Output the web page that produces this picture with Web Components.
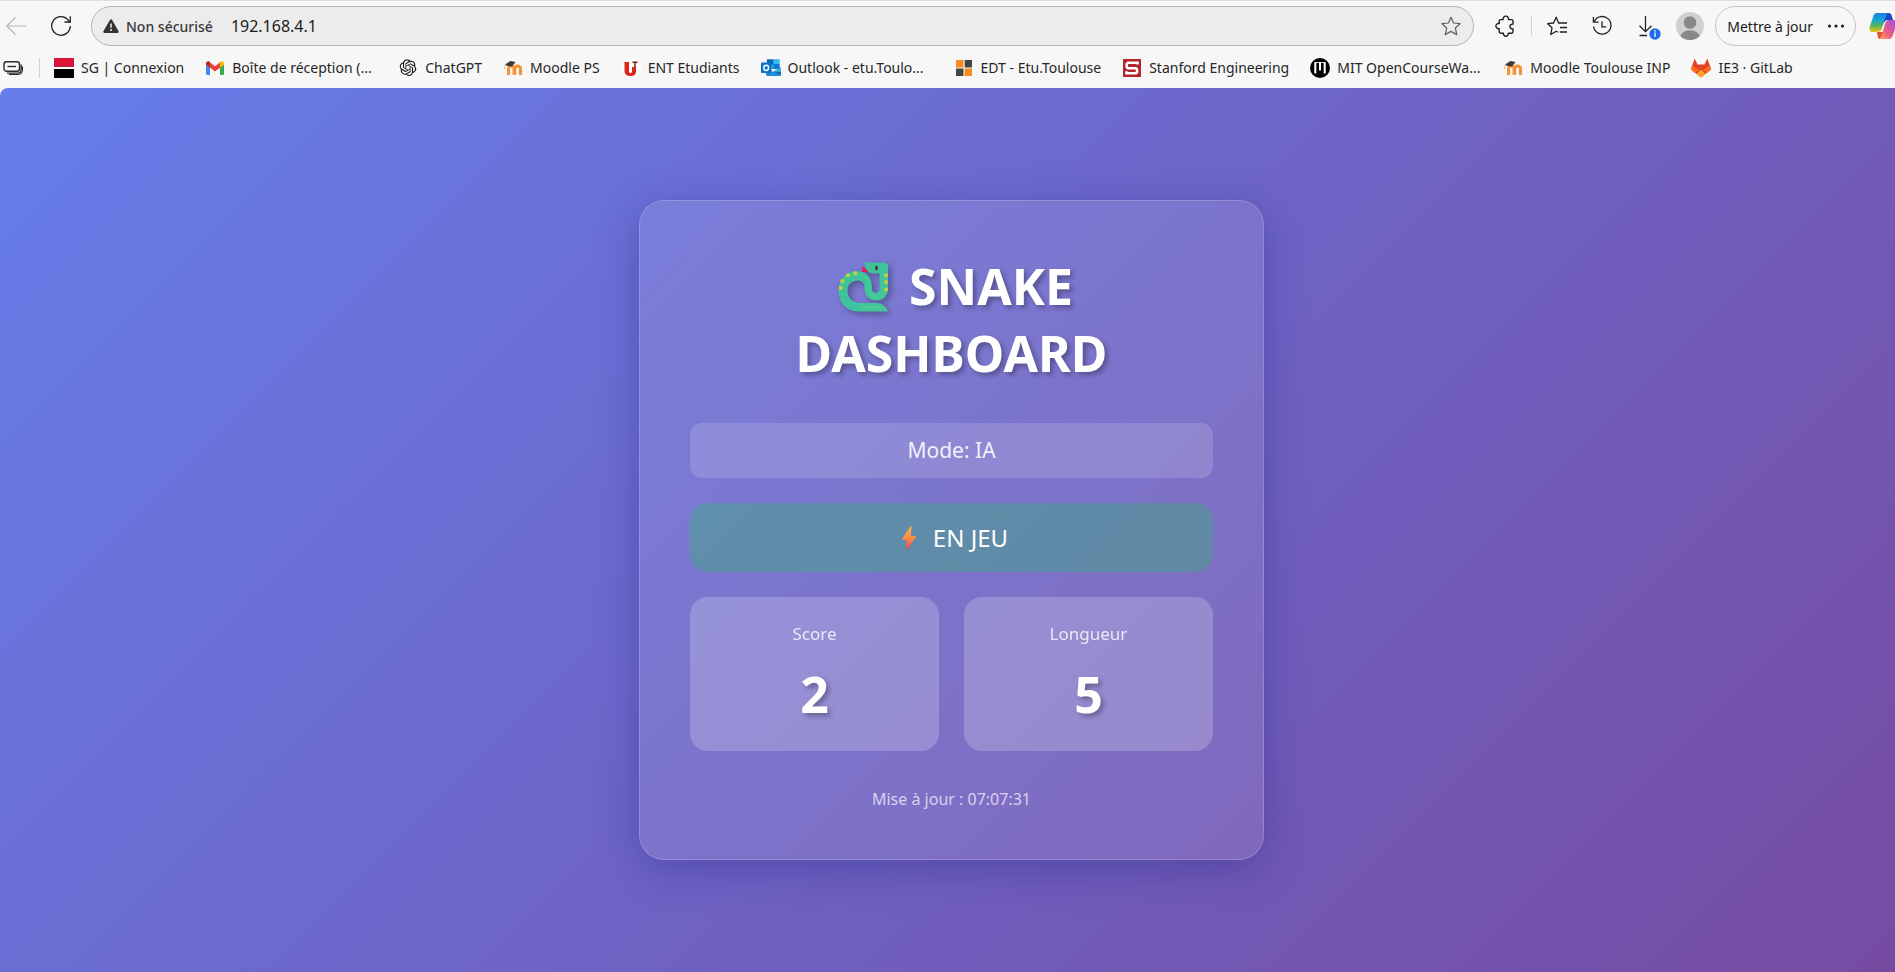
<!DOCTYPE html>
<html lang="fr">
<head>
<meta charset="utf-8">
<title>Snake Dashboard</title>
<style>
html,body{margin:0;height:100%}
body{overflow:hidden;background:#f7f7f7;font-family:"Noto Sans",sans-serif;color:#1b1b1b}
</style>
</head>
<body>
<browser-window>
  <browser-toolbar slot="chrome"></browser-toolbar>
  <bookmark-bar slot="chrome">
    <bookmark-link icon="sg">SG | Connexion</bookmark-link>
    <bookmark-link icon="gmail" cut>Boîte de réception (...</bookmark-link>
    <bookmark-link icon="chatgpt">ChatGPT</bookmark-link>
    <bookmark-link icon="moodle">Moodle PS</bookmark-link>
    <bookmark-link icon="ent">ENT Etudiants</bookmark-link>
    <bookmark-link icon="outlook" cut>Outlook - etu.Toulo...</bookmark-link>
    <bookmark-link icon="edt">EDT - Etu.Toulouse</bookmark-link>
    <bookmark-link icon="stanford">Stanford Engineering</bookmark-link>
    <bookmark-link icon="mit" cut>MIT OpenCourseWa...</bookmark-link>
    <bookmark-link icon="moodle">Moodle Toulouse INP</bookmark-link>
    <bookmark-link icon="gitlab">IE3 · GitLab</bookmark-link>
  </bookmark-bar>
  <snake-dashboard>
    <span slot="mode">Mode: IA</span>
    <span slot="status">EN JEU</span>
    <stat-card slot="stats" label="Score">2</stat-card>
    <stat-card slot="stats" label="Longueur">5</stat-card>
    <span slot="updated">Mise à jour : 07:07:31</span>
  </snake-dashboard>
</browser-window>

<script>
const ICONS = {
back:['0 0 20 20','<g fill="none" stroke="#b4b4b4" stroke-width="1.2"><path d="M.5 10H20M9.500 1.500.8 10l8.700 8.500"/></g>'],
refresh:['0 0 20 20','<g fill="none" stroke="#1f1f1f" stroke-width="1.300"><path d="M19.300 10A9.300 9.300 0 1 1 16.800 3.600L18.800 5.700"/><path d="M19.300.3V6H13.500"/></g>'],
warn:['0 0 16 14','<path d="M8 .3c.5 0 .9.300 1.100.7l6.500 11.300c.5.8 0 1.600-.9 1.600H1.300c-.9 0-1.400-.8-.9-1.600L6.900 1C7.100.6 7.500.3 8 .3z" fill="#333"/><path d="M8 4.500v4.200" stroke="#f0f0f0" stroke-width="1.500"/><circle cx="8" cy="11.100" r="1" fill="#f0f0f0"/>'],
star:['0 0 20 20','<path d="M10 1.200 12.600 7l6.500.7-4.800 4.300 1.500 6.600L10 15.400l-5.800 3.200 1.500-6.600L.9 7.700 7.400 7z" fill="none" stroke="#616161" stroke-width="1.200" stroke-linejoin="round"/>'],
puzzle:['0 0 20 20','<path d="M4 3.600H7.200A2.700 2.700 0 1 1 12.400 3.600H15.600Q17 3.600 17 5V8.200A2.400 2.400 0 1 0 17 12.800V15.800Q17 17.200 15.600 17.200H12.300A2.500 2.500 0 1 1 7.400 17.200H4.600Q3.200 17.200 3.200 15.800V12.600A2.600 2.600 0 1 1 3.200 7.600V5Q3.200 3.600 4.600 3.600" fill="none" stroke="#222" stroke-width="1.400" stroke-linejoin="round"/>'],
favs:['0 0 20 20','<g fill="none" stroke="#222" stroke-width="1.300" stroke-linejoin="round"><path d="M12.500 7H11.600L9.200 1.200 6.600 7 .7 7.700 5 11.800 3.800 18.500 9.200 15.300 11 16.300M12 7H20M13 11.500H20M12.800 16H20"/></g>'],
history:['0 0 21 20','<g fill="none" stroke="#222" stroke-width="1.400"><path d="M2.300 5.500A9.200 9.200 0 1 1 1.600 10.500"/><path d="M1.500.5V6H7"/><path d="M10.500 5V11H15"/></g>'],
download:['0 0 24 24','<g fill="none" stroke="#222" stroke-width="1.300"><path d="M8.500 0V15.500M2.500 9.800 8.500 15.700 14.500 9.800M2.500 19.500H10"/></g><circle cx="18" cy="18" r="5.700" fill="#1f6cf0"/><path d="M18 16.600v4.400" stroke="#fff" stroke-width="1.300"/><circle cx="18" cy="14.900" r=".8" fill="#fff"/>'],
avatar:['0 0 28 28','<defs><clipPath id="a"><circle cx="14" cy="14" r="14"/></clipPath></defs><g clip-path="url(#a)"><rect width="28" height="28" fill="#d2d0ce"/><circle cx="14" cy="10.500" r="6.300" fill="#8a8886"/><ellipse cx="14" cy="26" rx="10" ry="7.800" fill="#8a8886"/></g>'],
dots:['0 0 18 4','<g fill="#1b1b1b"><circle cx="2.500" cy="2" r="1.600"/><circle cx="9" cy="2" r="1.600"/><circle cx="15.500" cy="2" r="1.600"/></g>'],
copilot:['0 0 28 28','<defs><linearGradient id="c1" x1="0" y1="0" x2="0" y2="1"><stop offset="0" stop-color="#1a7de0"/><stop offset=".35" stop-color="#14a5d8"/><stop offset=".65" stop-color="#52b45c"/><stop offset="1" stop-color="#f2c511"/></linearGradient><linearGradient id="c2" x1="0" y1="1" x2=".9" y2="0"><stop offset="0" stop-color="#ffb057"/><stop offset=".4" stop-color="#f2607d"/><stop offset="1" stop-color="#a44fe0"/></linearGradient></defs><path d="M15 1h4.500c2 0 3 1.500 3.500 3.500L24 8h-5c-3 0-4 2-5 5z" fill="#1c45c8"/><path d="M10 27c-1-1-1.500-4-2-7h8l4 7z" fill="#e2502c"/><path d="M8 1h12c-2 0-3 2-4 5l-3 10c-1 3-2.500 4-5 4H4c-3 0-4-2-3.200-5L4 5c.8-2.600 2-4 4-4z" fill="url(#c1)"/><path d="M20 8h4c3 0 4 2 3.200 5L24 23c-.8 2.600-2 4-4 4H9c2 0 3-2 4-5l3-10c1-3 2-4 4-4z" fill="url(#c2)"/>'],
collections:['0 0 20 20','<g fill="none" stroke="#2a2a2a" stroke-width="1.400"><rect x="1" y="3.800" width="15.500" height="9.500" rx="2.500"/><path d="M4.500 8.500H13"/><path d="M18.200 6.500v5.300q0 3.300-3.300 3.300H4" /><path d="M19.500 8.500v4q0 4-4 4H6" stroke-width="1"/></g>'],
sg:['0 0 20 20','<path d="M0 0h20v10H0z" fill="#dc143c"/><path d="M0 8.200h20V11H0z" fill="#fff"/><path d="M0 8h20v.9H0z" fill="#b5102f"/><path d="M0 11h20v9H0z"/>'],
gmail:['0 0 20 20','<path d="M1 6v9.500Q1 17 2.500 17H5V9z" fill="#4285f4"/><path d="M15 9v8h2.500Q19 17 19 15.500V6z" fill="#34a853"/><path d="M5 4.500v5.300L10 13.500l5-3.700V4.500L10 8.200z" fill="#ea4335"/><path d="M1 5.500C1 3.300 3.400 2.500 5 3.800V9.800L1 6.800z" fill="#c5221f"/><path d="M19 5.500c0-2.200-2.400-3-4-1.700V9.800l4-3z" fill="#fbbc04"/>'],
chatgpt:['-2.500 -2 29 29','<path fill="#111" d="M22.2819 9.8211a5.9847 5.9847 0 0 0-.5157-4.9108 6.0462 6.0462 0 0 0-6.5098-2.9A6.0651 6.0651 0 0 0 4.9807 4.1818a5.9847 5.9847 0 0 0-3.9977 2.9 6.0462 6.0462 0 0 0 .7427 7.0966 5.98 5.98 0 0 0 .511 4.9107 6.051 6.051 0 0 0 6.5146 2.9001A5.9847 5.9847 0 0 0 13.2599 24a6.0557 6.0557 0 0 0 5.7718-4.2058 5.9894 5.9894 0 0 0 3.9977-2.9001 6.0557 6.0557 0 0 0-.7475-7.0729zm-9.022 12.6081a4.4755 4.4755 0 0 1-2.8764-1.0408l.1419-.0804 4.7783-2.7582a.7948.7948 0 0 0 .3927-.6813v-6.7369l2.02 1.1686a.071.071 0 0 1 .038.052v5.5826a4.504 4.504 0 0 1-4.4945 4.4944zm-9.6607-4.1254a4.4708 4.4708 0 0 1-.5346-3.0137l.142.0852 4.783 2.7582a.7712.7712 0 0 0 .7806 0l5.8428-3.3685v2.3324a.0804.0804 0 0 1-.0332.0615L9.74 19.9502a4.4992 4.4992 0 0 1-6.1408-1.6464zM2.3408 7.8956a4.485 4.485 0 0 1 2.3655-1.9728V11.6a.7664.7664 0 0 0 .3879.6765l5.8144 3.3543-2.0201 1.1685a.0757.0757 0 0 1-.071 0l-4.8303-2.7865A4.504 4.504 0 0 1 2.3408 7.872zm16.5963 3.8558L13.1038 8.364 15.1192 7.2a.0757.0757 0 0 1 .071 0l4.8303 2.7913a4.4944 4.4944 0 0 1-.6765 8.1042v-5.6772a.79.79 0 0 0-.407-.667zm2.0107-3.0231l-.142-.0852-4.7735-2.7818a.7759.7759 0 0 0-.7854 0L9.409 9.2297V6.8974a.0662.0662 0 0 1 .0284-.0615l4.8303-2.7866a4.4992 4.4992 0 0 1 6.6802 4.66zM8.3065 12.863l-2.02-1.1638a.0804.0804 0 0 1-.038-.0567V6.0742a4.4992 4.4992 0 0 1 7.3757-3.4537l-.142.0805L8.704 5.459a.7948.7948 0 0 0-.3927.6813zm1.0976-2.3654l2.602-1.4998 2.6069 1.4998v2.9994l-2.5974 1.4997-2.6067-1.4997Z"/>'],
moodle:['0 0 20 20','<path d="M5.500 17V11q0-3 2.800-3t2.800 3v6M11.700 17V11q0-3 2.900-3t2.900 3v6" fill="none" stroke="#f98012" stroke-opacity=".85" stroke-width="3"/><path d="M2 6.500 7.500 3 12.500 4 9 8.500 4.500 8z" fill="#3b3736"/><path d="M2.300 6.500 1.300 11.500" stroke="#f3b98a" stroke-width="1"/>'],
ent:['0 0 20 20','<circle cx="10" cy="10" r="10" fill="#fff"/><path d="M3.500 4H8v9.500q0 1.800 1.500 1.800t1.500-1.800V9h4v4.500q0 4.500-5.500 4.500t-6-4.500z" fill="#e2231a"/><path d="M11.500 4.300h5M14 4v5" stroke="#7a1a1a" stroke-width="1.500"/>'],
outlook:['0 0 20 20','<path d="M6 1.500h12.500V11H6z" fill="#28a8ea"/><path d="M6 1.500h6.500v5H6z" fill="#0f64b4"/><path d="M12.500 6h6v5h-6z" fill="#0f78d4"/><path d="M12.500 1.500h6V6h-6z" fill="#32bdf0"/><path d="M5 10.500 12.500 14 20 9.500V16.500Q20 18 18.500 18H6.500Q5 18 5 16.500z" fill="#1f8fe0"/><path d="M12.500 13.500 20 17.500V9.500z" fill="#1668b8"/><path d="M12.500 13.800 20 9.500V14z" fill="#38c0f2" opacity=".8"/><rect y="4.500" width="10.500" height="10.500" rx="1" fill="#0a70ca"/><ellipse cx="5.200" cy="9.800" rx="2.400" ry="2.600" fill="none" stroke="#fff" stroke-width="1.500"/>'],
edt:['0 0 20 20','<path d="M2 2h7.500v7.500H2zM10.700 10.500H18V18h-7.300z" fill="#f68b1f"/><path d="M10.700 2H18v7.500h-7.300zM2 10.500h7.500V18H2z" fill="#444"/>'],
stanford:['0 0 20 20','<path d="M1 1h18v18H1z" fill="#b1252b"/><path d="M15.500 6.500V4.700H6L4.700 6v3.200L6 10.200h8l1 1v3l-1 1H4.500v-2" fill="none" stroke="#fff" stroke-width="2.600"/>'],
mit:['0 0 20 20','<circle cx="10" cy="10" r="10"/><path d="M5.300 4.500V15.500M10 4.500v8M14.700 4.500V15.500" stroke="#fff" stroke-width="2"/><path d="M4.500 4.500H15.500" stroke="#fff" stroke-width=".8"/>'],
gitlab:['0 0 20 20','<path d="M3.700.5 1 8 0 11.500 10 19.500 20 11.500 19 8 16.300.5 13.500 6.500h-7z" fill="#e24329"/><path d="M0 11.500 1 7.500 6 10.500 10 13.800 14 10.500 19 7.500 20 11.500 16 15 13 12.500H7L4 15z" fill="#fc6d26"/><path d="M10 11.800 14.500 15.700 10 19.700 5.500 15.700z" fill="#fca326"/>'],
snake:['0 0 66 52','<defs><linearGradient id="s" x1="0" y1="0" x2="1" y2="1"><stop offset="0" stop-color="#40bd93"/><stop offset=".5" stop-color="#3fc39c"/><stop offset="1" stop-color="#46c69c"/></linearGradient></defs><path d="M39 10.500 31.500 5l1.300 3.400-1.600 2.900 6-.3z" fill="#e8174b"/><path d="M35 1.500H53.500Q58 1.500 58 6V27.500C58 35 53 39.500 46.500 39.500S34.500 35 34.500 28V26.500C34.500 22 31.500 19.500 28 19.500c-6 0-10.500 3.500-10.500 10.500 0 7 5 12 13 12H45.500C52 42 56 45 58 50.500H29.500C17 50.500 8.500 42 8.500 30c0-12.500 8.500-20 18.500-20 9 0 15 6.500 15 15.500v3c0 2 1.500 3.200 3.500 3.200s4-1.200 4-3.700V12.500H43.500C38.500 12.500 35 9 35 1.500z" fill="url(#s)"/><path d="M12 27c0-8 7-13.500 15-13.500S39 20 39 27c0 5 3 9 8 9M31 46h19" fill="none" stroke="#4bd787" stroke-width="2.500" stroke-linecap="round" opacity=".45"/><ellipse cx="46.500" cy="7" rx="1.300" ry="2.200" fill="#402a32"/><g fill="#c3d044"><circle cx="10.700" cy="27" r="2"/><circle cx="12.300" cy="20" r="2"/><circle cx="17.700" cy="14.200" r="2"/><circle cx="25.300" cy="12.300" r="2"/><circle cx="56" cy="14.200" r="2"/><circle cx="56" cy="21" r="2"/><circle cx="56" cy="28.500" r="2"/></g>'],
bolt:['0 0 32 24','<defs><linearGradient id="b" x1="0" y1="0" x2="0" y2="1"><stop offset="0" stop-color="#fcb53b"/><stop offset=".5" stop-color="#ff8b45"/><stop offset="1" stop-color="#f8424d"/></linearGradient></defs><path d="M15.500.5c.7-.6 1.200-.3 1.100.5L15.800 10H20c.9 0 1.200.6.7 1.300L12.700 23c-.6.8-1.300.5-1.200-.4L12 14H8c-.8 0-1.200-.7-.7-1.400z" fill="url(#b)"/>']
};

const define = (name, html, setup) => customElements.define(name, class extends HTMLElement {
  constructor(){
    super();
    const t = document.createElement('template');
    t.innerHTML = html;
    this.attachShadow({mode:'open'}).append(t.content.cloneNode(true));
  }
  connectedCallback(){ if (setup) setup(this, this.shadowRoot); }
});

// Inline SVG icon; the host sets its size.
define('ui-icon', `<style>:host{display:inline-block;flex:none;width:20px;height:20px}svg{display:block;width:100%;height:100%;overflow:visible}</style><svg aria-hidden="true"></svg>`,
 (el, root) => {
  const [box, body] = ICONS[el.getAttribute('name')];
  const svg = root.querySelector('svg');
  svg.setAttribute('viewBox', box);
  svg.innerHTML = body;
});

// The window runs slightly past the right edge of the screen.
define('browser-window', `<style>
:host{display:flex;flex-direction:column;min-height:100vh;width:calc(100% + 8px);background:#f7f7f7}
main{flex:1;display:flex;flex-direction:column}
</style><slot name="chrome"></slot><main><slot></slot></main>`);

define('browser-toolbar', `<style>
:host{display:flex;align-items:center;box-sizing:border-box;border-top:1px solid #dedede;padding:5px 6px 0 6px}
button{font:inherit;color:inherit;background:none;border:0;padding:0;margin:0;display:flex;align-items:center;flex:none}
.nav{display:flex;gap:25px;margin-right:20px}
.address{flex:1;display:flex;align-items:center;box-sizing:border-box;height:40px;padding:0 12px 0 11px;border:1px solid #b5b5b5;border-radius:20px;background:#ececec}
.security{gap:7px;font-size:14px;font-weight:500;color:#3a3a3a}
.security ui-icon{width:16px;height:14px}
input{flex:1;min-width:0;border:0;outline:0;background:none;padding:0;margin:0 18px;font:16px "Noto Sans",sans-serif;color:#1b1b1b}
.tools{display:flex;align-items:center;gap:25px;margin-left:22px}
.sep{width:1px;height:20px;background:#cfcfcf;margin:0 -10px}
.download ui-icon{width:24px;height:24px;margin:3px -2px 0 0}
.avatar{margin-left:17px}
.avatar ui-icon{width:28px;height:28px}
.update{box-sizing:border-box;height:40px;margin:0 13px 0 11px;padding:0 10px 0 11px;gap:14px;border:1px solid #c4c4c4;border-radius:20px;font-size:14px}
.update ui-icon{width:18px;height:4px}
.copilot ui-icon{width:28px;height:28px}
</style>
<div class="nav"><button aria-label="Retour"><ui-icon name="back"></ui-icon></button><button aria-label="Actualiser"><ui-icon name="refresh"></ui-icon></button></div>
<div class="address">
  <button class="security"><ui-icon name="warn"></ui-icon>Non sécurisé</button>
  <input type="text" value="192.168.4.1" aria-label="Adresse">
  <button aria-label="Ajouter aux favoris"><ui-icon name="star"></ui-icon></button>
</div>
<div class="tools">
  <button aria-label="Extensions"><ui-icon name="puzzle"></ui-icon></button>
  <span class="sep"></span>
  <button aria-label="Favoris"><ui-icon name="favs"></ui-icon></button>
  <button aria-label="Historique"><ui-icon name="history"></ui-icon></button>
  <button class="download" aria-label="Téléchargements"><ui-icon name="download"></ui-icon></button>
</div>
<button class="avatar" aria-label="Profil"><ui-icon name="avatar"></ui-icon></button>
<button class="update">Mettre à jour<ui-icon name="dots"></ui-icon></button>
<button class="copilot" aria-label="Copilot"><ui-icon name="copilot"></ui-icon></button>`);

define('bookmark-bar', `<style>
:host{display:block}
nav{display:flex;align-items:center;gap:21px;box-sizing:border-box;height:42px;padding:2px 0 0 3px}
button{display:flex;background:none;border:0;padding:0}
.sep{width:1px;height:20px;background:#cfcfcf;margin:0 -7px 0 -5px}
</style><nav aria-label="Favoris"><button aria-label="Collections"><ui-icon name="collections"></ui-icon></button><span class="sep"></span><slot></slot></nav>`);

define('bookmark-link', `<style>
:host{display:block;flex:none}
a{display:flex;align-items:center;gap:7px;color:#262626;text-decoration:none;font-size:14px;line-height:20px;white-space:nowrap}
:host([cut]) .text{width:145px}
</style><a href="#"><span class="icon"></span><span class="text"><slot></slot></span></a>`,
 (el, root) => {
  const icon = document.createElement('ui-icon');
  icon.setAttribute('name', el.getAttribute('icon'));
  root.querySelector('.icon').replaceWith(icon);
});

define('stat-card', `<style>
:host{display:block;flex:1;padding:25px 25px 22px;border-radius:18px;background:rgba(255,255,255,.2);text-align:center}
.label{font-size:17px;line-height:24px;margin-bottom:14px;opacity:.8}
.value{font-size:50px;font-weight:700;line-height:69px;text-shadow:3px 3px 5px rgba(0,0,0,.3)}
</style><div class="label"></div><div class="value"><slot></slot></div>`,
 (el, root) => { root.querySelector('.label').textContent = el.getAttribute('label'); });

define('snake-dashboard', `<style>
:host{flex:1;display:flex;align-items:center;justify-content:center;border-radius:8px 0 0 0;color:#fff;background:linear-gradient(135deg,#667eea 0%,#764ba2 100%)}
.card{box-sizing:border-box;width:625px;padding:50px;border:1px solid rgba(255,255,255,.18);border-radius:25px;background:rgba(255,255,255,.1);box-shadow:0 10px 40px rgba(31,38,135,.37);text-align:center}
h1{margin:0 0 36px;padding-top:2px;font-size:50px;font-weight:700;line-height:67px;text-shadow:3px 3px 5px rgba(0,0,0,.3)}
h1 ui-icon{width:66px;height:52px;vertical-align:-8px;filter:drop-shadow(3px 3px 3px rgba(0,0,0,.3))}
.mode{padding:12px;margin-bottom:25px;border-radius:12px;background:rgba(255,255,255,.15);font-size:21px;line-height:31px;color:rgba(255,255,255,.9)}
.status{display:flex;align-items:center;justify-content:center;gap:6px;padding:18px;margin-bottom:25px;border-radius:18px;background:rgba(40,190,100,.33);font-size:24px;line-height:33px}
.status ui-icon{width:32px;height:24px}
.stats{display:flex;gap:25px}
.updated{margin-top:38px;font-size:16px;line-height:20px;color:rgba(255,255,255,.7)}
</style>
<section class="card">
<h1><ui-icon name="snake"></ui-icon> SNAKE<br>DASHBOARD</h1>
<div class="mode"><slot name="mode"></slot></div>
<div class="status"><ui-icon name="bolt"></ui-icon><slot name="status"></slot></div>
<div class="stats"><slot name="stats"></slot></div>
<div class="updated"><slot name="updated"></slot></div>
</section>`);
</script>
</body>
</html>
